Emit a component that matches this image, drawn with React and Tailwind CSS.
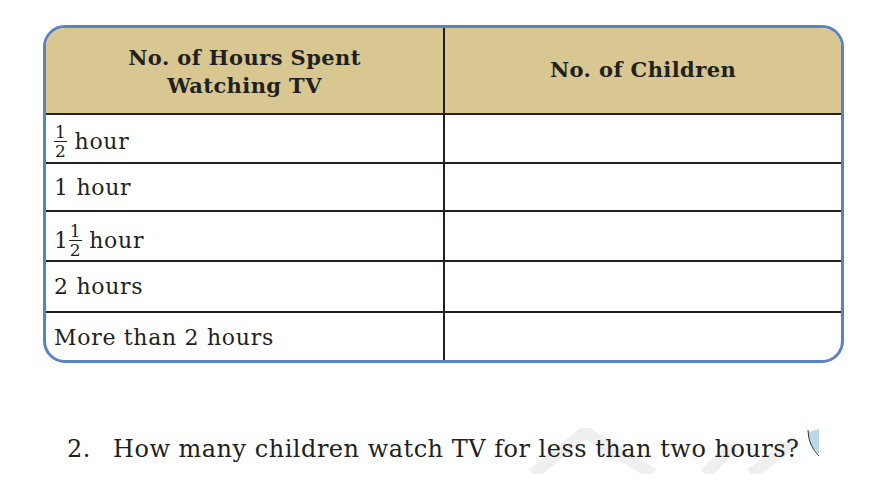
import React from 'react'

const Frac = ({ className = '' }) => (
  <span className={`relative -top-[1px] inline-flex flex-col items-center align-middle text-[17px] leading-[18px] tracking-normal ${className}`}>
    <span className='px-[1px]'>1</span>
    <span className='h-px w-full bg-[#231f20]'></span>
    <span className='px-[1px]'>2</span>
  </span>
)

const rows = [
  { h: 'h-[49px]', pad: 'pt-[8px]', label: <><Frac /> hour</> },
  { h: 'h-[48px]', pad: '', label: '1 hour' },
  { h: 'h-[50px]', pad: 'pt-[10px]', label: <>1<Frac /> hour</> },
  { h: 'h-[51px]', pad: '', label: '2 hours' },
  { h: 'h-[47px]', pad: 'pt-[2px]', label: 'More than 2 hours', last: true },
]

export default function App() {
  return (
    <div className='relative h-[494px] w-[878px] overflow-hidden bg-white text-[#231f20]' style={{ fontFamily: '"DejaVu Serif", serif' }}>
      <svg className='absolute left-[515px] top-[428px]' width='300' height='46' viewBox='0 0 300 46'>
        <g stroke='#efefef' strokeWidth='12' fill='none'>
          <path d='M18 46 L70 4 L138 46' />
          <path d='M190 46 L218 18' />
          <path d='M236 46 L282 12' />
        </g>
      </svg>
      <svg className='absolute left-[805px] top-[429px]' width='16' height='28' viewBox='0 0 16 28'>
        <path d='M14 0 L14 25 Q3 16 3 3 Z' fill='#bcd8e8' />
        <path d='M3 1 Q3 16 14 27' stroke='#333' strokeWidth='1' fill='none' />
      </svg>

      <div className='relative ml-[43px] mt-[25px] w-[801px] overflow-hidden rounded-[22px] border-[3px] border-[#5b84be]'>
        <div className='flex h-[87px] border-b-2 border-[#231f20] bg-[#d8c790] text-[21px] font-bold leading-[28px] tracking-[0.4px]'>
          <div className='flex w-[399px] items-center justify-center border-r-2 border-[#231f20] pt-[2px] text-center'>
            No. of Hours Spent<br />Watching TV
          </div>
          <div className='flex flex-1 items-center justify-center pb-[2px]'>No. of Children</div>
        </div>
        {rows.map((r, i) => (
          <div key={i} className={`flex ${r.h} ${r.last ? '' : 'border-b-2 border-[#231f20]'}`}>
            <div className={`flex w-[399px] items-center border-r-2 border-[#231f20] pl-[8px] text-[22px] tracking-[0.7px] ${r.pad}`}>
              <span>{r.label}</span>
            </div>
            <div className='flex-1'></div>
          </div>
        ))}
      </div>

      <div className='relative mt-[72px] flex items-baseline pl-[67px] text-[24px] leading-[28px] tracking-[0.5px]'>
        <span className='w-[46px]'>2.</span>
        <span>How many children watch TV for less than two hours?</span>
      </div>
    </div>
  )
}
